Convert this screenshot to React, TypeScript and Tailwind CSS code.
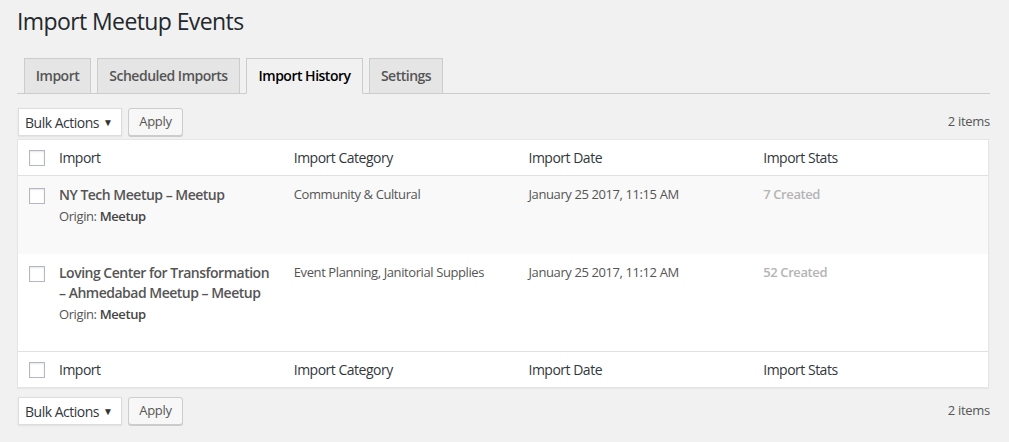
import React from "react";

const font = { fontFamily: '"Open Sans", "Noto Sans", Arial, sans-serif' };

function Checkbox() {
  return (
    <span className="block w-4 h-4 bg-white border border-[#b4b9be] shadow-[inset_0_1px_2px_rgba(0,0,0,0.1)]" />
  );
}

function Actions() {
  return (
    <div className="flex items-center justify-between h-[28px]">
      <div className="flex items-center gap-[6px]">
        <div className="flex items-center justify-between w-[104px] h-[28px] bg-white border border-[#ddd] pl-[6px] pr-[8px] text-[14px] text-[#32373c] shadow-[0_1px_2px_rgba(0,0,0,0.07)]">
          <span className="tracking-[-0.5px]">Bulk Actions</span>
          <span className="text-[10px] text-[#333]">▼</span>
        </div>
        <div className="flex items-center justify-center w-[55px] h-[28px] bg-[#f7f7f7] border border-[#ccc] rounded-[3px] shadow-[0_1px_0_#ccc] text-[13px] tracking-[-0.3px] text-[#555]">
          Apply
        </div>
      </div>
      <div className="text-[13px] tracking-[-0.3px] text-[#555]">2 items</div>
    </div>
  );
}

function HeadRow({ top }: { top?: boolean }) {
  return (
    <div
      className={
        "flex items-center h-[36px] text-[14px] tracking-[-0.5px] text-[#32373c] bg-white " +
        (top ? "border-b border-[#e1e1e1]" : "border-t border-[#e1e1e1]")
      }
    >
      <div className="w-[31px] pl-[11px] shrink-0">
        <Checkbox />
      </div>
      <div className="w-[235px] px-[10px]">Import</div>
      <div className="w-[235px] px-[10px]">Import Category</div>
      <div className="w-[235px] px-[10px]">Import Date</div>
      <div className="w-[235px] px-[10px]">Import Stats</div>
    </div>
  );
}

function Row({
  title,
  category,
  date,
  stats,
  alt,
  h,
}: {
  title: React.ReactNode;
  category: string;
  date: string;
  stats: string;
  alt?: boolean;
  h: string;
}) {
  return (
    <div className={"flex items-start " + h + " " + (alt ? "bg-[#f9f9f9]" : "bg-white")}>
      <div className="w-[31px] pl-[11px] pt-[12px] shrink-0">
        <Checkbox />
      </div>
      <div className="w-[235px] px-[10px] pt-[9px]">
        <div className="text-[14px] leading-[19.5px] font-semibold tracking-[-0.5px] whitespace-nowrap text-[#555]">
          {title}
        </div>
        <div className="mt-[2.5px] text-[13px] leading-[19.5px] tracking-[-0.4px] text-[#555]">
          Origin: <span className="font-semibold text-[#444]">Meetup</span>
        </div>
      </div>
      <div className="w-[235px] px-[10px] pt-[9px] text-[13px] leading-[19.5px] tracking-[-0.4px] text-[#555]">
        {category}
      </div>
      <div className="w-[235px] px-[10px] pt-[9px] text-[13px] leading-[19.5px] tracking-[-0.4px] text-[#555]">
        {date}
      </div>
      <div className="w-[235px] px-[10px] pt-[9px] text-[13px] leading-[19.5px] tracking-[-0.4px] font-semibold text-[#b4b4b4]">
        {stats}
      </div>
    </div>
  );
}

const tabs = [
  { label: "Import", w: "w-[67px]" },
  { label: "Scheduled Imports", w: "w-[143px]" },
  { label: "Import History", w: "w-[117px]", active: true },
  { label: "Settings", w: "w-[74px]" },
];

export default function App() {
  return (
    <div className="w-[1009px] h-[442px] bg-[#f1f1f1] overflow-hidden" style={font}>
      <div className="pl-[17px] pr-[19px]">
        <h1 className="pt-[6px] text-[23px] leading-[30px] text-[#23282d] font-normal tracking-[-0.6px]">
          Import Meetup Events
        </h1>
        <div className="mt-[22px] flex items-end gap-[6px] pl-[7px] border-b border-[#ccc]">
          {tabs.map((t) => (
            <div
              key={t.label}
              className={
                "h-[36px] -mb-px flex items-center justify-center pb-[1px] border text-[14px] font-semibold tracking-[-0.5px] " +
                t.w +
                " " +
                (t.active
                  ? "bg-[#f1f1f1] border-[#ccc] border-b-[#f1f1f1] text-black"
                  : "bg-[#e5e5e5] border-[#ccc] text-[#555]")
              }
            >
              {t.label}
            </div>
          ))}
        </div>
        <div className="mt-[14px] pl-[1px]">
          <Actions />
        </div>
        <div className="mt-[3px] w-[972px] bg-white border border-[#e5e5e5] shadow-[0_1px_1px_rgba(0,0,0,0.04)]">
          <HeadRow top />
          <Row
            alt
            h="h-[78px]"
            title="NY Tech Meetup – Meetup"
            category="Community & Cultural"
            date="January 25 2017, 11:15 AM"
            stats="7 Created"
          />
          <Row
            h="h-[97px]"
            title={
              <>
                Loving Center for Transformation
                <br />– Ahmedabad Meetup – Meetup
              </>
            }
            category="Event Planning, Janitorial Supplies"
            date="January 25 2017, 11:12 AM"
            stats="52 Created"
          />
          <HeadRow />
        </div>
        <div className="mt-[9px] pl-[1px]">
          <Actions />
        </div>
      </div>
    </div>
  );
}
